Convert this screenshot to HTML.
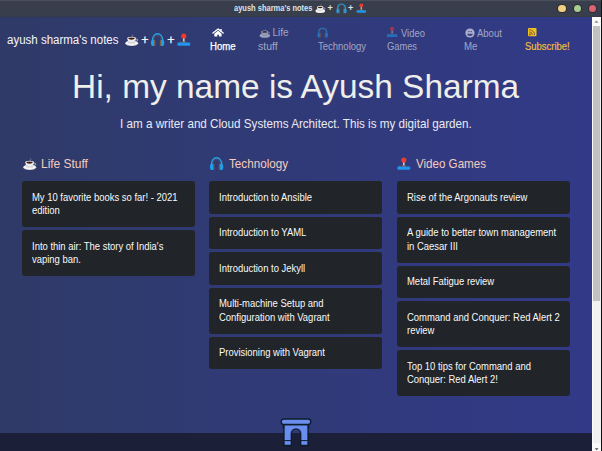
<!DOCTYPE html>
<html><head><meta charset="utf-8">
<style>
*{margin:0;padding:0;box-sizing:border-box}
html,body{width:602px;height:451px;overflow:hidden;background:#1b1f38}
body{position:relative;font-family:"Liberation Sans",sans-serif}
.abs{position:absolute;white-space:nowrap}
#tb{position:absolute;left:0;top:0;width:602px;height:17px;background:#383e4b;border-top:1px solid #4a4f5b;border-bottom:1px solid #353a47}
#pg{position:absolute;left:0;top:17px;width:592px;height:416px;background:linear-gradient(to right,#2f3a68,#323a88)}
#ft{position:absolute;left:0;top:433px;width:592px;height:18px;background:#1b1f38}
#sb{position:absolute;left:592px;top:17px;width:9px;height:434px;background:#f1f1f1}
#sbl{position:absolute;left:601px;top:0;width:1px;height:451px;background:#111}
#th{position:absolute;left:593.3px;top:26px;width:6.4px;height:275px;background:#c1c1c1}
.dot{position:absolute;top:4.6px;width:7.4px;height:7.4px;border-radius:50%;box-shadow:0 0 0 1px #2a2e38}
.txt{position:absolute;white-space:nowrap;transform-origin:0 0}
.nav{font-size:10px;line-height:13.3px;color:rgba(255,255,255,.55)}
.col{position:absolute;top:181.4px;width:173px}
.card{background:#212529;border-radius:3px;padding:9.4px 9.6px;margin-bottom:3.2px;font-size:10px;line-height:13.5px;color:#f8f9fa}
.card span{display:inline-block;white-space:nowrap;vertical-align:top;transform:scaleX(.945);transform-origin:0 0}
.hd{font-size:12.2px;color:#f6cbbd}
svg{position:absolute;overflow:visible}
</style></head><body>
<svg width="0" height="0" style="position:absolute">
<defs>
<symbol id="cof" viewBox="0 0 20 18" overflow="visible">
<ellipse cx="9.7" cy="13.3" rx="6.5" ry="2.7" fill="#d8d8dc"/>
<ellipse cx="9.7" cy="13.0" rx="6.0" ry="2.2" fill="#f7f7f8"/>
<ellipse cx="9.6" cy="12.4" rx="3.7" ry="1.2" fill="#cfcfd4"/>
<path d="M13.5 9.3c1.7-.5 2.5.3 2.2 1.1-.3.8-1.3 1.1-2.4 1.1" fill="none" stroke="#c9cad2" stroke-width=".9"/>
<path d="M5.4 8.3c0 3.4 1.6 4.3 4.2 4.3s4.2-.9 4.2-4.3z" fill="#ededf0"/>
<path d="M6.2 11c.8 1.1 1.9 1.5 3.4 1.5s2.6-.4 3.4-1.5" fill="none" stroke="#d4d4da" stroke-width=".8"/>
<ellipse cx="9.6" cy="8.3" rx="4.2" ry="1.5" fill="#fbfbfb"/>
<ellipse cx="9.6" cy="8.6" rx="3.2" ry="1.1" fill="#3a1c0c"/>
<path d="M10.6 7.2c-.7-.8.7-1.5 0-2.7" fill="none" stroke="#c0c4d6" stroke-width=".8" opacity=".55"/>
</symbol>
<symbol id="hp" viewBox="0 0 20 18" overflow="visible">
<path d="M4.4 11.2C4.4 1.4 14.8 1.4 14.8 11.2" fill="none" stroke="#2aa2e2" stroke-width="1.5"/>
<path d="M5.8 10.8C5.8 3.7 13.4 3.7 13.4 10.8" fill="none" stroke="#7c6648" stroke-width=".55" opacity=".8"/>
<ellipse cx="4.9" cy="12.9" rx="1.95" ry="3.1" fill="#1ea0f2"/>
<ellipse cx="14.3" cy="12.9" rx="1.95" ry="3.1" fill="#1ea0f2"/>
<rect x="6.0" y="9.9" width="1.35" height="6.1" rx=".5" fill="#7a5e40"/>
<rect x="11.85" y="9.9" width="1.35" height="6.1" rx=".5" fill="#7a5e40"/>
</symbol>
<symbol id="joy" viewBox="0 0 20 18" overflow="visible">
<rect x="9.05" y="7.8" width="1.5" height="4" fill="#d4d8e0"/>
<circle cx="9.8" cy="6" r="2.6" fill="#ef3b2d"/>
<ellipse cx="9.8" cy="12" rx="2.2" ry=".7" fill="#8a7a3a"/>
<ellipse cx="5.9" cy="12" rx=".8" ry=".55" fill="#d9443a"/>
<rect x="3.4" y="12.4" width="12.8" height="3.4" rx="1" fill="#1f96f0"/>
</symbol>
</defs>
</svg>

<div id="tb"></div>
<div class="txt" style="left:233.6px;top:3px;font-size:8.8px;line-height:10px;color:#dfe3ea;font-weight:700;transform:scaleX(.852)">ayush sharma's notes</div>
<svg style="left:313.1px;top:1.2px" width="15" height="13.5" viewBox="0 0 20 18"><use href="#cof"/></svg>
<div class="txt" style="left:327.5px;top:3px;font-size:9px;line-height:10px;color:#dfe3ea;font-weight:700">+</div>
<svg style="left:333.7px;top:1.3px" width="15.6" height="14" viewBox="0 0 20 18"><use href="#hp"/></svg>
<div class="txt" style="left:348px;top:3px;font-size:9px;line-height:10px;color:#dfe3ea;font-weight:700">+</div>
<svg style="left:354px;top:1.1px" width="14.8" height="13.3" viewBox="0 0 20 18"><use href="#joy"/></svg>
<div class="dot" style="left:558.3px;background:#f2cf80"></div>
<div class="dot" style="left:573.5px;background:#a9cd8f"></div>
<div class="dot" style="left:589px;background:#d9646f"></div>

<div id="pg"></div>
<div id="ft"></div>

<!-- brand -->
<div class="txt" style="left:7px;top:33px;font-size:12.5px;line-height:15px;color:#f4f5fb;transform:scaleX(.92)">ayush sharma's notes</div>
<svg style="left:122px;top:30px" width="20" height="18" viewBox="0 0 20 18"><use href="#cof"/></svg>
<div class="txt" style="left:141.3px;top:33px;font-size:12.5px;line-height:15px;color:#f4f5fb;-webkit-text-stroke:.3px #f4f5fb">+</div>
<svg style="left:148px;top:30px" width="20" height="18" viewBox="0 0 20 18"><use href="#hp"/></svg>
<div class="txt" style="left:167.3px;top:33px;font-size:12.5px;line-height:15px;color:#f4f5fb;-webkit-text-stroke:.3px #f4f5fb">+</div>
<svg style="left:174px;top:30px" width="20" height="18" viewBox="0 0 20 18"><use href="#joy"/></svg>

<!-- nav -->
<svg style="left:211.5px;top:27.5px" width="12" height="10" viewBox="0 0 12 10">
<path d="M0.9 5.1L6.1 0.9 11.2 5.1" fill="none" stroke="#fff" stroke-width="1.3" stroke-linecap="round" stroke-linejoin="round"/>
<rect x="8.2" y="1" width="1.5" height="2.6" fill="#fff"/>
<path d="M2.3 5.7L6.1 2.6 9.6 5.7V8.6H7.1V6.8H5.3V8.6H2.3z" fill="#fff"/>
</svg>
<div class="txt nav" style="left:209.6px;top:39.5px;color:#fff;-webkit-text-stroke:.25px #fff;transform:scaleX(.96)">Home</div>

<svg style="left:256.6px;top:25.1px;opacity:.55" width="16" height="14.4" viewBox="0 0 20 18"><use href="#cof"/></svg>
<div class="txt nav" style="left:272.5px;top:25.5px">Life</div>
<div class="txt nav" style="left:258px;top:39.5px;transform:scaleX(1.05)">stuff</div>

<svg style="left:315.4px;top:24.8px;opacity:.55" width="16" height="14.4" viewBox="0 0 20 18"><use href="#hp"/></svg>
<div class="txt nav" style="left:317.5px;top:39.5px;transform:scaleX(.95)">Technology</div>

<svg style="left:384.4px;top:24.4px;opacity:.55" width="16.6" height="14.9" viewBox="0 0 20 18"><use href="#joy"/></svg>
<div class="txt nav" style="left:400.8px;top:26.5px;transform:scaleX(.94)">Video</div>
<div class="txt nav" style="left:386.5px;top:39.5px;transform:scaleX(.93)">Games</div>

<svg style="left:465.35px;top:27.6px" width="10" height="10" viewBox="0 0 10 10">
<circle cx="5" cy="5" r="4.6" fill="#fff" opacity=".6"/>
<ellipse cx="3.8" cy="3.5" rx=".75" ry=".7" fill="#313a81" opacity=".8"/>
<ellipse cx="6.2" cy="3.5" rx=".75" ry=".7" fill="#313a81" opacity=".8"/>
<path d="M2.3 5.7H7.7A2.7 2.2 0 0 1 2.3 5.7z" fill="#313a81" opacity=".9"/>
</svg>
<div class="txt nav" style="left:477.2px;top:26.5px;transform:scaleX(.95)">About</div>
<div class="txt nav" style="left:463.5px;top:39.5px;transform:scaleX(.97)">Me</div>

<svg style="left:527.6px;top:28.1px" width="8.5" height="8.3" viewBox="0 0 8.5 8.3">
<rect x="0" y="0" width="8.5" height="8.3" rx="1.1" fill="#f4c21c"/>
<circle cx="1.9" cy="6.4" r=".85" fill="#5e4a52"/>
<path d="M1.2 3.9a3.2 3.2 0 0 1 3.2 3.2M1.2 1.7a5.4 5.4 0 0 1 5.4 5.4" fill="none" stroke="#5e4a52" stroke-width=".85"/>
</svg>
<div class="txt nav" style="left:525.3px;top:39.5px;color:#f0bb3a;-webkit-text-stroke:.2px #f0bb3a;transform:scaleX(.945)">Subscribe!</div>

<!-- hero -->
<div class="txt" style="left:71.5px;top:68.8px;font-size:33.5px;line-height:36px;color:#eeeeea;transform:scaleX(.998)">Hi, my name is Ayush Sharma</div>
<div class="txt" style="left:119.5px;top:117px;font-size:12.2px;line-height:14px;color:#e8eaf2;transform:scaleX(.957)">I am a writer and Cloud Systems Architect. This is my digital garden.</div>

<!-- headings -->
<svg style="left:20px;top:154px" width="20" height="18" viewBox="0 0 20 18"><use href="#cof"/></svg>
<div class="txt hd" style="left:40.5px;top:157px;line-height:15px;transform:scaleX(.98)">Life Stuff</div>
<svg style="left:206.6px;top:153.9px" width="20" height="18" viewBox="0 0 20 18"><use href="#hp"/></svg>
<div class="txt hd" style="left:228.5px;top:157px;line-height:15px;transform:scaleX(.96)">Technology</div>
<svg style="left:394px;top:154px" width="20" height="18" viewBox="0 0 20 18"><use href="#joy"/></svg>
<div class="txt hd" style="left:416px;top:157px;line-height:15px;transform:scaleX(.95)">Video Games</div>

<!-- columns -->
<div class="col" style="left:22px">
<div class="card"><span>My 10 favorite books so far! - 2021<br>edition</span></div>
<div class="card"><span>Into thin air: The story of India's<br>vaping ban.</span></div>
</div>
<div class="col" style="left:209px">
<div class="card"><span>Introduction to Ansible</span></div>
<div class="card"><span>Introduction to YAML</span></div>
<div class="card"><span>Introduction to Jekyll</span></div>
<div class="card"><span>Multi-machine Setup and<br>Configuration with Vagrant</span></div>
<div class="card"><span>Provisioning with Vagrant</span></div>
</div>
<div class="col" style="left:397px">
<div class="card"><span>Rise of the Argonauts review</span></div>
<div class="card"><span>A guide to better town management<br>in Caesar III</span></div>
<div class="card"><span>Metal Fatigue review</span></div>
<div class="card"><span>Command and Conquer: Red Alert 2<br>review</span></div>
<div class="card"><span>Top 10 tips for Command and<br>Conquer: Red Alert 2!</span></div>
</div>

<!-- footer arch -->
<svg style="left:280px;top:418px" width="32" height="29" viewBox="0 0 32 29">
<path d="M2.6 7.4h2v3h-2zM27.4 7.4h2v3h-2z" fill="#0c1c2a"/>
<path d="M4 6.5V27.5H11.3V15.6a4.7 4.7 0 0 1 9.4 0V27.5H28V6.5z" fill="#6a8df0" stroke="#0c1c2a" stroke-width="1.3"/>
<rect x="1.2" y="1" width="29.6" height="5.5" rx="2.7" fill="#6a8df0" stroke="#0c1c2a" stroke-width="1.3"/>
<path d="M4.5 22.6h6.6M20.9 22.6h6.6" stroke="#0c1c2a" stroke-width="1"/>
</svg>

<div id="sb"></div>
<div id="sbl"></div>
<svg style="left:592px;top:17px" width="9" height="434" viewBox="0 0 9 434">
<rect x="0" y="0" width="9" height="9" fill="#fafafa"/>
<rect x="0" y="426" width="9" height="8" fill="#fafafa"/>
<rect x="0" y="0" width="1" height="434" fill="#fcfcfc"/>
<path d="M2.3 5.8L4.4 3.6 6.5 5.8z" fill="#8a8a8a"/>
<path d="M2.7 431.2L4.7 433.2 6.6 431.2z" fill="#505050"/>
</svg>
<div id="th"></div>
</body></html>
